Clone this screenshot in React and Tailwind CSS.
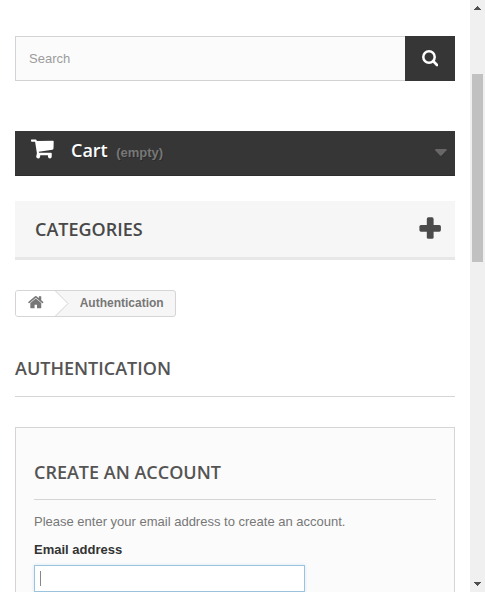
import React from "react";

const heading = "font-['Open_Sans',sans-serif] text-[18px] font-semibold leading-[22px] uppercase";

function SearchBar() {
  return (
    <form className="flex h-[45px]">
      <div className="flex flex-1 items-center border border-r-0 border-[#d2d3d5] bg-[#fbfbfb] pl-[13px] text-[13px] leading-[18px] text-[#9c9b9b]">
        Search
      </div>
      <button type="button" aria-label="Search" className="flex w-[50px] items-center justify-center bg-[#363636]">
        <svg viewBox="0 0 16.5 16.5" className="h-[16.5px] w-[16.5px]" fill="none" stroke="#fff">
          <circle cx="7" cy="7" r="5.7" strokeWidth="2.5" />
          <path d="M11.3 11.3L15 15" strokeWidth="2.7" strokeLinecap="round" />
        </svg>
      </button>
    </form>
  );
}

function CartBar() {
  return (
    <div className="mt-[50px] flex h-[45px] items-start border-b border-[#2e2e2e] bg-[#363636] pr-[8.5px] pl-4 [text-shadow:1px_1px_rgba(0,0,0,0.2)]">
      <svg viewBox="0 0 24 21" className="mt-2 h-[21px] w-6 shrink-0" fill="#fff">
        <path d="M0 .9Q0 .4.5 .4H4.6Q5.4.4 5.6 1.2L5.8 1.9 21.8 1.7Q22.7 1.7 22.7 2.6L22.5 9.6Q22.4 10.6 21.4 10.8L7.7 12.7 8 13.8H19.8Q20.8 13.8 20.8 14.7L20.7 17.7Q20.6 19.4 18.9 19.4Q17 19.4 17 17.5L16.9 16.2H9.3L9 17.9Q8.7 19.4 7.2 19.4Q5.3 19.4 5.2 17.5L5.9 14.2 4.1 2.7H1Q0 2.7 0 2Z" />
      </svg>
      <span className="mt-2 ml-4 font-['Open_Sans',sans-serif] text-[18px] leading-[22px] font-semibold text-white">Cart</span>
      <span className="mt-[13px] ml-[8.4px] text-[13px] leading-[18px] font-bold text-[#777]">(empty)</span>
      <svg viewBox="0 0 12 8" className="mt-[18px] ml-auto h-2 w-3">
        <path d="M1.3 1.5H12L7 7.8Z" fill="#2c2c2c" />
        <path d="M.3 .1H11.5V1.5L6.5 6.8H5.3L.3 1.5Z" fill="#686666" />
      </svg>
    </div>
  );
}

function Categories() {
  return (
    <div className="mt-[25px] flex h-[59px] items-start justify-between border-b-[3px] border-[#e7e7e7] bg-[#f6f6f6] pr-[14px] pl-5">
      <h2 className={heading + " mt-[17px] text-[#484848]"}>Categories</h2>
      <svg viewBox="0 0 22 22" className="mt-4 h-[22px] w-[22px]" fill="#4b4b4b">
        <rect x="7.8" y="0.3" width="6.8" height="21.5" rx="1.6" />
        <rect x="0.4" y="7.9" width="21.5" height="6.8" rx="1.6" />
      </svg>
    </div>
  );
}

function Breadcrumb() {
  return (
    <div className="mt-[30px] flex h-[27px] w-[161px] overflow-hidden rounded-[3px] border border-[#d6d4d4] bg-[#f6f6f6] text-[12px] leading-6 font-bold text-[#777]">
      <div className="flex w-[39px] bg-white pl-[11px]">
        <svg viewBox="0 0 1792 1792" className="mt-[3px] h-[17px] w-[17px] shrink-0" fill="#777">
          <path transform="translate(30 -30)" d="M1472 992v480q0 26-19 45t-45 19h-384v-384h-256v384h-384q-26 0-45-19t-19-45v-480q0-1 .5-3t.5-3l575-474 575 474q1 2 1 6zm223-69l-62 74q-8 9-21 11h-3q-13 0-21-7l-692-577-692 577q-12 8-24 7-13-2-21-11l-62-74q-8-10-7-23.5t11-21.5l719-599q32-26 76-26t76 26l244 204v-195q0-14 9-23t23-9h192q14 0 23 9t9 23v408l219 182q10 8 11 21.5t-7 23.5z" />
        </svg>
      </div>
      <svg viewBox="0 0 14 25" className="h-[25px] w-[14px] shrink-0">
        <path d="M0 0L13 12.5L0 25Z" fill="#fff" />
        <path d="M.5 0L13 12.5L.5 25" fill="none" stroke="#d6d4d4" strokeWidth="1" />
      </svg>
      <span className="ml-[10.7px]">Authentication</span>
    </div>
  );
}

function CreateAccount() {
  return (
    <form className="mt-[30px] h-[300px] border border-[#d6d4d4] bg-[#fbfbfb] px-[18px] pt-[33px] text-[13px] leading-[18px] text-[#777]">
      <h3 className={heading + " h-[39px] border-b border-[#d6d4d4] text-[#555454]"}>Create an account</h3>
      <p className="mt-[13px]">Please enter your email address to create an account.</p>
      <div className="mt-[10px] font-bold text-[#333]">Email address</div>
      <div className="mt-[6px] h-[27px] w-[271px] border border-[#9bc3de] bg-white pt-[5px] pl-[5px] shadow-[0_0_3px_rgba(102,175,233,0.25)]">
        <div className="h-[15px] w-px bg-[#888]" />
      </div>
    </form>
  );
}

function Scrollbar() {
  return (
    <div className="flex w-[15px] flex-col items-center bg-[#f0f0f0]">
      <svg viewBox="0 0 7 4" shapeRendering="crispEdges" className="mt-[6px] h-1 w-[7px]" fill="#505050">
        <path d="M3 0h1v1h1v1h1v1h1v1H0V3h1V2h1V1h1z" />
      </svg>
      <div className="mt-16 h-[188px] w-[11px] bg-[#c1c1c1]" />
      <svg viewBox="0 0 7 4" shapeRendering="crispEdges" className="mt-auto mb-[6px] h-1 w-[7px]" fill="#505050">
        <path d="M0 0h7v1H6v1H5v1H4v1H3V3H2V2H1V1H0z" />
      </svg>
    </div>
  );
}

export default function App() {
  return (
    <div className="flex h-[592px] w-[485px] overflow-hidden bg-white font-['Liberation_Sans',Arial,sans-serif]">
      <main className="h-[592px] w-[470px] overflow-hidden px-[15px] pt-9">
        <SearchBar />
        <CartBar />
        <Categories />
        <Breadcrumb />
        <h1 className={heading + " mt-10 h-10 border-b border-[#d6d4d4] text-[#555454]"}>Authentication</h1>
        <CreateAccount />
      </main>
      <Scrollbar />
    </div>
  );
}
